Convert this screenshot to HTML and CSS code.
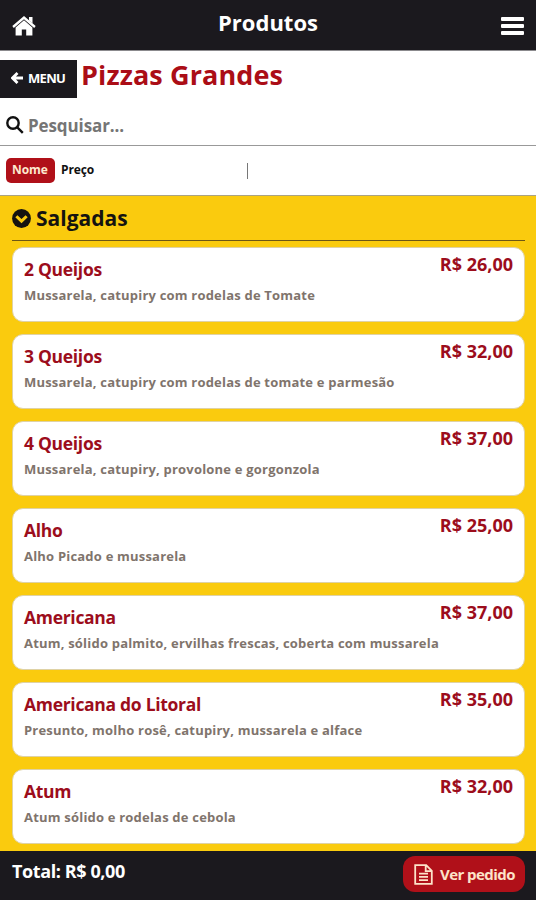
FILE: index.html
```html
<!DOCTYPE html>
<html lang="pt-BR">
<head>
  <meta charset="UTF-8">
  <meta name="viewport" content="width=device-width, initial-scale=1.0">
  <title>Produtos</title>
  <link rel="stylesheet" href="styles.css">
</head>
<body>

  <header class="topbar">
    <svg class="home-icon" viewBox="0 0 24 20">
      <path d="M17 1h3.5v6.5L17 4.5z"/>
      <path d="M12 0L0.3 10l1.5 1.9L12 3.3l10.2 8.6 1.5-1.9z"/>
      <path d="M12 4.3L3.6 11.4V19.5h6.2v-6h4.4v6h6.2v-8.1z"/>
    </svg>
    <h1>Produtos</h1>
    <div class="burger"><i></i><i></i><i></i></div>
  </header>

  <!-- Category title -->
  <div class="title-row">
    <button class="menu-btn">
      <svg class="arrow-icon" viewBox="0 0 12 12"><path d="M6.5 1L1.5 6l5 5M2 6h10"/></svg>
      <span>MENU</span>
    </button>
    <h2>Pizzas Grandes</h2>
  </div>

  <!-- Search -->
  <div class="search-row">
    <svg class="search-icon" viewBox="0 0 18 18"><circle cx="7" cy="7" r="5.7"/><path d="M11.3 11.3l5.5 5.5"/></svg>
    <span class="search-text">Pesquisar...</span>
  </div>

  <!-- Sorting -->
  <div class="sort-row">
    <span class="sort active">Nome</span>
    <span class="sort">Preço</span>
    <span class="divider"></span>
  </div>

  <main class="products">
    <div class="group-title">
      <svg class="chevron-icon" viewBox="0 0 20 20"><circle cx="10" cy="10" r="9.9"/><path d="M4.6 7.6L10 12.8l5.4-5.2"/></svg>
      <h3>Salgadas</h3>
    </div>

    <div class="card">
      <div class="info">
        <h4>2 Queijos</h4>
        <p>Mussarela, catupiry com rodelas de Tomate</p>
      </div>
      <span class="price">R$ 26,00</span>
    </div>
    <div class="card">
      <div class="info">
        <h4>3 Queijos</h4>
        <p>Mussarela, catupiry com rodelas de tomate e parmesão</p>
      </div>
      <span class="price">R$ 32,00</span>
    </div>
    <div class="card">
      <div class="info">
        <h4>4 Queijos</h4>
        <p>Mussarela, catupiry, provolone e gorgonzola</p>
      </div>
      <span class="price">R$ 37,00</span>
    </div>
    <div class="card">
      <div class="info">
        <h4>Alho</h4>
        <p>Alho Picado e mussarela</p>
      </div>
      <span class="price">R$ 25,00</span>
    </div>
    <div class="card">
      <div class="info">
        <h4>Americana</h4>
        <p>Atum, sólido palmito, ervilhas frescas, coberta com mussarela</p>
      </div>
      <span class="price">R$ 37,00</span>
    </div>
    <div class="card">
      <div class="info">
        <h4>Americana do Litoral</h4>
        <p>Presunto, molho rosê, catupiry, mussarela e alface</p>
      </div>
      <span class="price">R$ 35,00</span>
    </div>
    <div class="card">
      <div class="info">
        <h4>Atum</h4>
        <p>Atum sólido e rodelas de cebola</p>
      </div>
      <span class="price">R$ 32,00</span>
    </div>
  </main>

  <footer class="bottombar">
    <span class="total">Total: R$ 0,00</span>
    <button class="order-btn">
      <svg class="doc-icon" viewBox="0 0 19 21"><path d="M1.2 1.2h11l5.6 5.6v13H1.2zM11.7 1.2v6h6M5 9.7h9M5 12.9h9M5 16.1h9"/></svg>
      <span>Ver pedido</span>
    </button>
  </footer>

</body>
</html>
```

FILE: styles.css
```css
* {
  box-sizing: border-box;
}
body {
  margin: 0;
  height: 900px;
  display: flex;
  flex-direction: column;
  overflow: hidden;
  font-family: "Open Sans", "Noto Sans", sans-serif;
  font-weight: 700;
  background: #fff;
}
h1, h2, h3, h4, p {
  margin: 0;
  white-space: nowrap;
}
button {
  border: 0;
  font: inherit;
  color: #fff;
}
.topbar {
  flex: none;
  height: 51px;
  padding: 0 12px;
  display: grid;
  grid-template-columns: 24px 1fr 24px;
  align-items: start;
  background: #1b191e;
  border-bottom: 1px solid #8b8a8d;
}
.home-icon {
  width: 24px;
  height: 20px;
  margin-top: 16px;
  fill: #fff;
}
.topbar h1 {
  color: #fff;
  font-size: 22px;
  line-height: 30px;
  margin-top: 7px;
  text-align: center;
}
.burger {
  display: flex;
  flex-direction: column;
  gap: 3px;
  margin-top: 17px;
  width: 23px;
  justify-self: end;
}
.burger i {
  height: 4px;
  border-radius: 1px;
  background: #fff;
}
.title-row {
  flex: none;
  height: 57px;
  display: flex;
  align-items: flex-start;
  padding-top: 9px;
}
.menu-btn {
  width: 77px;
  height: 38px;
  padding: 0 0 3px 11px;
  display: flex;
  align-items: center;
  gap: 5px;
  background: #1b191e;
  font-size: 13px;
  letter-spacing: -0.7px;
}
.arrow-icon {
  width: 12px;
  height: 12px;
  fill: none;
  stroke: #fff;
  stroke-width: 2.8;
}
.title-row h2 {
  color: #ab0d16;
  font-size: 27px;
  line-height: 32px;
  letter-spacing: 0.1px;
  margin-left: 4px;
  margin-top: -1px;
}
.search-row {
  flex: none;
  height: 38px;
  padding-left: 6px;
  display: flex;
  align-items: flex-start;
  gap: 4px;
  border-bottom: 1px solid #999;
}
.search-icon {
  width: 18px;
  height: 18px;
  margin-top: 8px;
  fill: none;
  stroke: #111;
  stroke-width: 2.4;
}
.search-text {
  color: #757575;
  font-size: 17px;
  line-height: 24px;
  letter-spacing: -0.1px;
  margin-top: 6px;
}
.sort-row {
  flex: none;
  height: 50px;
  padding-left: 6px;
  display: flex;
  align-items: center;
  border-bottom: 1px solid #aaa382;
  font-size: 12px;
  letter-spacing: -0.1px;
}
.sort {
  color: #111;
  padding: 0 6px;
  line-height: 24px;
  padding-bottom: 1px;
}
.sort.active {
  width: 49px;
  background: #b01019;
  color: #fde9cf;
  border-radius: 5px;
}
.divider {
  width: 1px;
  height: 16px;
  margin-left: 147px;
  background: #777;
}
.products {
  flex: 1;
  min-height: 0;
  padding: 0 11px 0 12px;
  overflow: hidden;
  background: #facb0e;
}
.group-title {
  height: 45px;
  margin-bottom: 6px;
  display: flex;
  align-items: flex-start;
  gap: 5px;
  border-bottom: 1px solid #6e5714;
}
.group-title h3 {
  color: #151310;
  font-size: 21px;
  line-height: 28px;
  margin-top: 8px;
}
.chevron-icon {
  width: 19px;
  height: 19px;
  margin-top: 13px;
  fill: #151310;
}
.chevron-icon path {
  fill: none;
  stroke: #facb0e;
  stroke-width: 3.2;
}
.card {
  height: 75px;
  margin-bottom: 12px;
  padding: 0 11px;
  display: flex;
  justify-content: space-between;
  background: #fff;
  border: 1px solid #dfd2a4;
  border-radius: 11px;
}
.card h4 {
  color: #9c0d1c;
  font-size: 17.5px;
  line-height: 24px;
  letter-spacing: -0.3px;
  margin-top: 9px;
}
.card p {
  color: #80746c;
  font-size: 13px;
  line-height: 18px;
  letter-spacing: 0.2px;
  margin-top: 5px;
}
.price {
  color: #9c0d1c;
  font-size: 18px;
  line-height: 24px;
  margin-top: 4px;
}
.bottombar {
  flex: none;
  height: 49px;
  padding: 5px 11px 0 12px;
  display: flex;
  justify-content: space-between;
  align-items: flex-start;
  background: #1b191e;
}
.total {
  color: #fff;
  font-size: 18px;
  line-height: 24px;
  letter-spacing: -0.4px;
  margin-top: 3px;
}
.order-btn {
  width: 122px;
  height: 36px;
  padding: 0 0 0 11px;
  display: flex;
  align-items: center;
  gap: 7px;
  background: #b01019;
  color: #fde3c9;
  border-radius: 12px;
  font-size: 15px;
  letter-spacing: -0.55px;
}
.order-btn span {
  white-space: nowrap;
  margin-top: -1px;
}
.doc-icon {
  flex: none;
  width: 19px;
  height: 21px;
  fill: none;
  stroke: #fde3c9;
  stroke-width: 1.8;
}
```
